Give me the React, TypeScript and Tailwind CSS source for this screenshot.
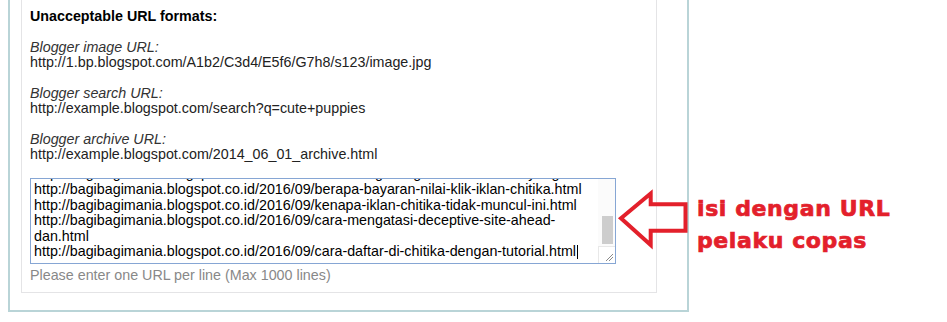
import React from "react";

const lines = [
  "http://bagibagimania.blogspot.co.id/2016/09/cara-menghilangkan-iklan-chitika-yang-tidak-juga-muncul.html",
  "http://bagibagimania.blogspot.co.id/2016/09/berapa-bayaran-nilai-klik-iklan-chitika.html",
  "http://bagibagimania.blogspot.co.id/2016/09/kenapa-iklan-chitika-tidak-muncul-ini.html",
  "http://bagibagimania.blogspot.co.id/2016/09/cara-mengatasi-deceptive-site-ahead-",
  "dan.html",
];
const lastLine = "http://bagibagimania.blogspot.co.id/2016/09/cara-daftar-di-chitika-dengan-tutorial.html";

export default function App() {
  return (
    <div
      className="relative w-[947px] h-[322px] bg-white overflow-hidden flex items-start"
      style={{ fontFamily: '"Liberation Sans", Arial, sans-serif' }}
    >
      {/* outer box */}
      <div className="ml-[8px] w-[681px] border-l-2 border-r-2 border-b-2 border-[#b9d4d7] pl-[11px] pb-[17px] shrink-0">
        <div className="w-[636px] border-l border-r border-b border-[#e4e4e6] pt-[9px] pl-[8px] pb-[9px] text-[14.3px] leading-[15px] text-[#222]">
          <div className="font-bold text-black">Unacceptable URL formats:</div>
          <div className="mt-[16px]">
            <div className="italic text-[#333]">Blogger image URL:</div>
            <div>http://1.bp.blogspot.com/A1b2/C3d4/E5f6/G7h8/s123/image.jpg</div>
          </div>
          <div className="mt-[16px]">
            <div className="italic text-[#333]">Blogger search URL:</div>
            <div>http://example.blogspot.com/search?q=cute+puppies</div>
          </div>
          <div className="mt-[16px]">
            <div className="italic text-[#333]">Blogger archive URL:</div>
            <div>http://example.blogspot.com/2014_06_01_archive.html</div>
          </div>
          {/* textarea mimic */}
          <div className="mt-[16px] w-[586px] h-[86px] border border-[#86a6d4] bg-white flex overflow-hidden">
            <div className="flex-1 overflow-hidden pl-[3px]">
              <div className="mt-[-12.6px] text-[14.3px] leading-[15.6px] text-black whitespace-nowrap">
                {lines.map((l, i) => (
                  <div key={i}>{l}</div>
                ))}
                <div className="flex items-center">
                  <span>{lastLine}</span>
                  <span className="inline-block w-[1px] h-[14px] bg-black ml-[1px]" />
                </div>
              </div>
            </div>
            <div className="w-[17px] flex flex-col shrink-0">
              <div className="flex-1 bg-[#fbfbfb] pl-[4px] pr-[2px] pt-[37px] pb-[2px]">
                <div className="h-[28px] bg-[#cdcdcd]" />
              </div>
              <div className="h-[18px] border-t border-l border-[#e8e8e8] bg-white relative">
                <svg className="absolute right-[1px] bottom-[1px]" width="10" height="10" viewBox="0 0 10 10">
                  <path d="M9 2 L2 9 M9 5 L5 9" stroke="#8a8a8a" strokeWidth="1" fill="none" />
                </svg>
              </div>
            </div>
          </div>
          <div className="mt-[4px] text-[#888]">Please enter one URL per line (Max 1000 lines)</div>
        </div>
      </div>

      {/* annotation text */}
      <div
        className="ml-[8px] mt-[193px] text-[22px] leading-[32px] font-bold tracking-[0.6px] text-[#e3202b] whitespace-nowrap [-webkit-text-stroke:0.7px_#e3202b]"
        style={{ fontFamily: '"DejaVu Sans", sans-serif' }}
      >
        <div>isi dengan URL</div>
        <div>pelaku copas</div>
      </div>

      {/* arrow overlay */}
      <svg className="absolute left-0 top-0 pointer-events-none" width="947" height="322">
        <polygon
          points="621,218.3 650.7,193.5 650.7,204.3 685.5,204.3 685.5,230.7 650.7,230.7 650.7,245"
          fill="none"
          stroke="#e3202b"
          strokeWidth="4"
          strokeLinejoin="miter"
        />
      </svg>
    </div>
  );
}
